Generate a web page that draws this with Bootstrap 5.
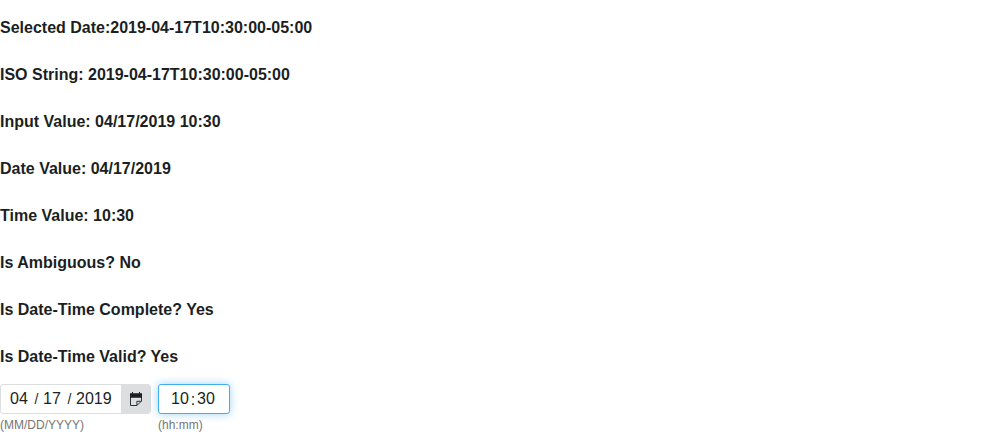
<!DOCTYPE html>
<html lang="en">
<head>
<meta charset="utf-8">
<meta name="viewport" content="width=device-width, initial-scale=1">
<title>Date time field</title>
<link href="https://cdn.jsdelivr.net/npm/bootstrap@5.3.0/dist/css/bootstrap.min.css" rel="stylesheet">
<style>
body{font-family:"Liberation Sans",Arial,sans-serif;font-size:16px;line-height:19px;color:#1b1f23;background:#fff}
.readout{gap:28px;padding:18px 0}
.readout h3{font-size:16px;line-height:19px;font-weight:700}
.fields{gap:7px}
.segments{height:30px;border:1px solid #dcdee0;border-radius:3px;background:#fff;overflow:hidden}
.date-segments{padding-left:9px}
.time-segments{padding:0 14px 0 12px;border-color:#40aeec;box-shadow:0 0 8px rgba(64,174,236,.5)}
.segments input{width:18px;height:28px;padding:0;border:0;outline:0;background:none;color:inherit;font:inherit}
.segments .year{width:36px}
.slash{width:15px;padding-left:2px;font-size:14px;text-align:center}
.colon{width:8px;text-align:center}
.calendar-toggle{width:29px;height:28px;margin-left:9px;padding:0;border:0;border-radius:0;background:#dcdee0;color:#1b1f23}
.calendar-toggle:hover{background:#dcdee0}
.hint{margin-top:2px;font-size:12px;line-height:18px;color:#757575}
</style>
</head>
<body>
<main>
<section class="readout d-flex flex-column">
<h3 class="m-0">Selected Date:2019-04-17T10:30:00-05:00</h3>
<h3 class="m-0">ISO String: 2019-04-17T10:30:00-05:00</h3>
<h3 class="m-0">Input Value: 04/17/2019 10:30</h3>
<h3 class="m-0">Date Value: 04/17/2019</h3>
<h3 class="m-0">Time Value: 10:30</h3>
<h3 class="m-0">Is Ambiguous? No</h3>
<h3 class="m-0">Is Date-Time Complete? Yes</h3>
<h3 class="m-0">Is Date-Time Valid? Yes</h3>
</section>
<form class="fields d-flex align-items-start">
<div role="group" aria-labelledby="date-hint">
<div class="segments date-segments d-inline-flex align-items-center">
<input type="text" value="04" maxlength="2" aria-label="Month">
<span class="slash">/</span>
<input type="text" value="17" maxlength="2" aria-label="Day">
<span class="slash">/</span>
<input class="year" type="text" value="2019" maxlength="4" aria-label="Year">
<button type="button" class="calendar-toggle btn d-flex align-items-center justify-content-center" aria-label="Open calendar">
<svg width="14" height="14" viewBox="0 0 14 14" aria-hidden="true"><path fill="currentColor" d="M1 1.300h2V0h1v1.300h6V0h1v1.300h2v4.400H1z"/><path fill="none" stroke="currentColor" stroke-width=".9" d="M1.500 5v8.500H8l4.500-4.500V5M7.900 13.300V9.300h4.300"/></svg>
</button>
</div>
<div id="date-hint" class="hint">(MM/DD/YYYY)</div>
</div>
<div role="group" aria-labelledby="time-hint">
<div class="segments time-segments d-inline-flex align-items-center">
<input type="text" value="10" maxlength="2" aria-label="Hours">
<span class="colon">:</span>
<input type="text" value="30" maxlength="2" aria-label="Minutes">
</div>
<div id="time-hint" class="hint">(hh:mm)</div>
</div>
</form>
</main>
<script src="https://cdn.jsdelivr.net/npm/bootstrap@5.3.0/dist/js/bootstrap.bundle.min.js"></script>
</body>
</html>
